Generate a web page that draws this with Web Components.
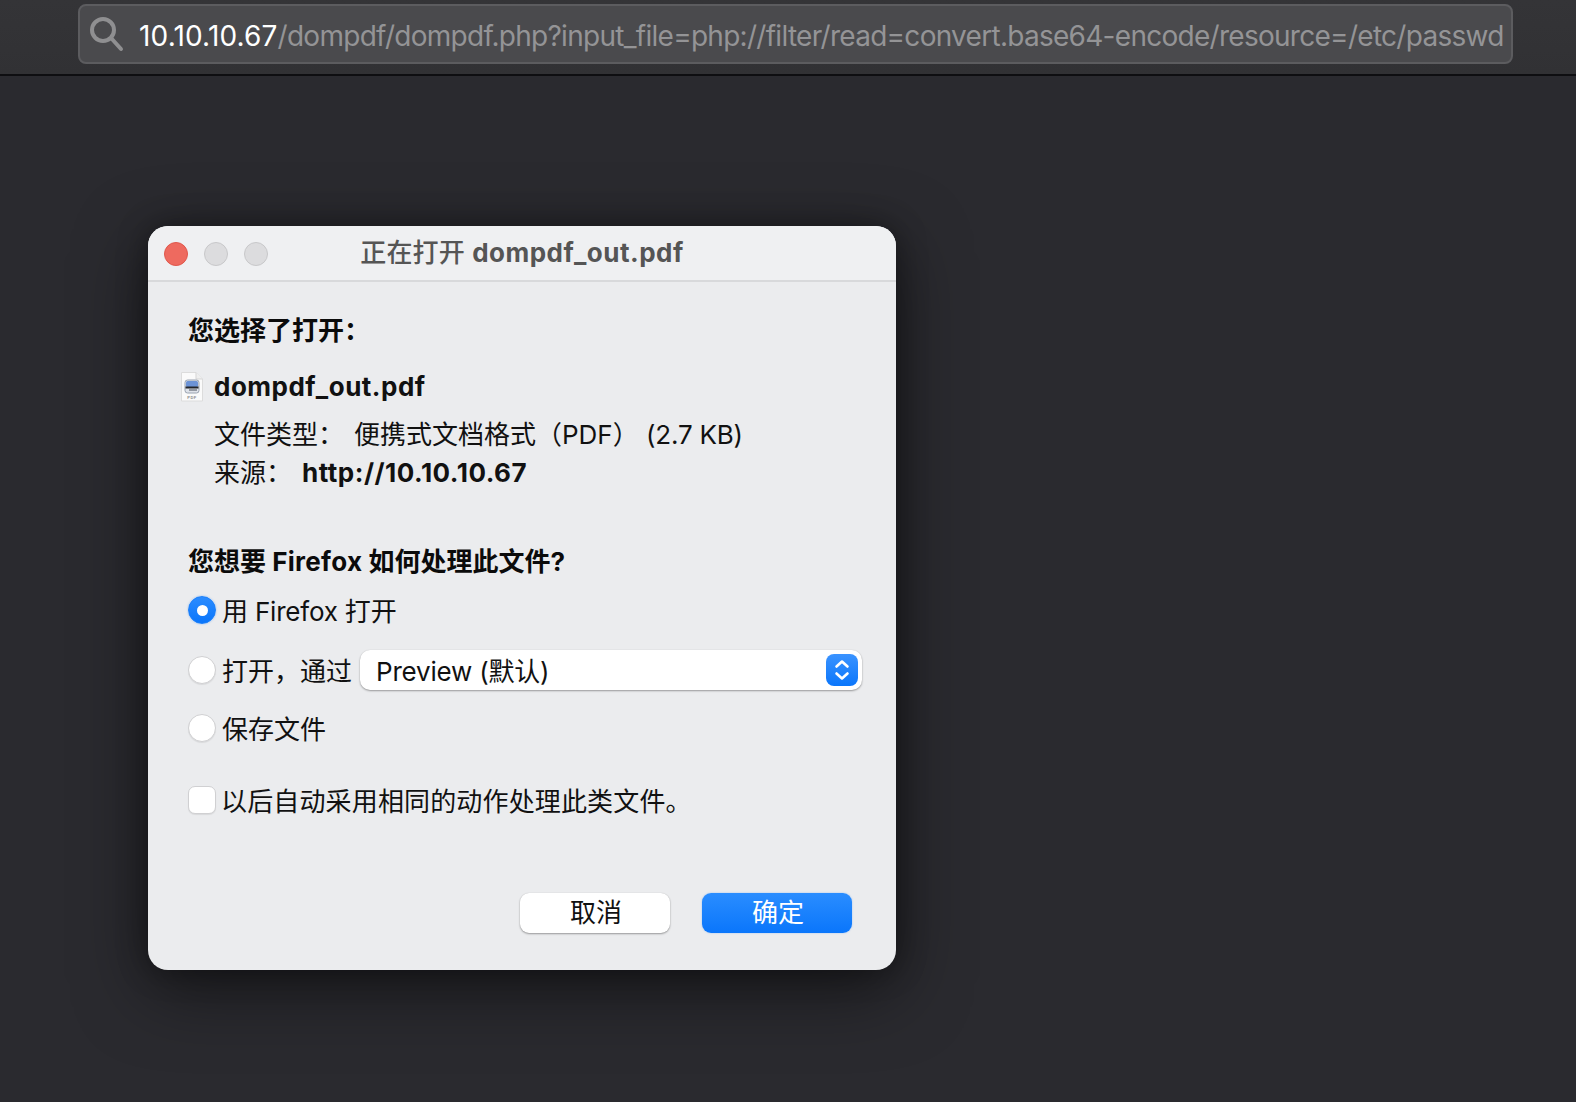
<!DOCTYPE html>
<html lang="zh">
<head>
<meta charset="utf-8">
<title>dompdf_out.pdf</title>
<style>
html, body { margin: 0; height: 100%; }
body {
  background: #2a2a2f;
  overflow: hidden;
  font-family: Inter, "Noto Sans CJK SC", sans-serif;
}
b { letter-spacing: .5px; }
.tight { letter-spacing: -.2px; }
</style>
</head>
<body>
<url-bar></url-bar>
<open-dialog>
  <span slot="title">正在打开 <b>dompdf_out.pdf</b></span>
</open-dialog>

<script>
const FONT = `Inter, "Noto Sans CJK SC", sans-serif`;

class UrlBar extends HTMLElement {
  constructor() {
    super();
    this.attachShadow({ mode: "open" });
    this.shadowRoot.innerHTML = `
<style>
:host {
  display: block;
  box-sizing: border-box;
  height: 76px;
  padding: 4px 63px 0 78px;
  background: linear-gradient(#343437, #313134);
  border-bottom: 2px solid #0e0e11;
}
.field {
  box-sizing: border-box;
  height: 60px;
  display: flex;
  align-items: center;
  background: #4a4a4d;
  border: 2px solid #5c5c5f;
  border-radius: 8px;
  padding-left: 9px;
  white-space: nowrap;
  overflow: hidden;
  font: 400 28px ${FONT};
}
svg { flex: none; margin-right: 14px; }
.host { color: #fff; letter-spacing: 0.15px; padding-top: 4px; }
.path { color: #949496; letter-spacing: -0.72px; padding-top: 4px; }
</style>
<div class="field">
  <svg width="36" height="36" viewBox="0 0 36 36" fill="none" stroke="#8f8f91" stroke-width="4" stroke-linecap="round">
    <circle cx="14" cy="14" r="11"/>
    <path d="M22.5 22.5 L32 33"/>
  </svg>
  <span class="host">10.10.10.67</span><span class="path">/dompdf/dompdf.php?input_file=php://filter/read=convert.base64-encode/resource=/etc/passwd</span>
</div>`;
  }
}

class TrafficLights extends HTMLElement {
  constructor() {
    super();
    this.attachShadow({ mode: "open" });
    this.shadowRoot.innerHTML = `
<style>
:host { display: flex; gap: 16px; }
i {
  box-sizing: border-box;
  width: 24px; height: 24px;
  border-radius: 50%;
  background: #dcdcde;
  border: 1px solid #c8c8ca;
}
i.close { background: #ee6a5f; border-color: #e0574c; }
</style>
<i class="close"></i><i></i><i></i>`;
  }
}

class FileIcon extends HTMLElement {
  constructor() {
    super();
    this.attachShadow({ mode: "open" });
    this.shadowRoot.innerHTML = `
<style>:host { display: block; width: 24px; height: 30px; }</style>
<svg width="24" height="30" viewBox="0 0 24 30">
  <path d="M1.5 .5 H16 L22.5 7 V29 H1.5 Z" fill="#fafafa" stroke="#dcdcdc"/>
  <path d="M16 .5 V7 H22.5" fill="#eee" stroke="#d5d5d5"/>
  <rect x="5" y="8" width="14" height="13" rx="2.5" fill="#dfe3ea" stroke="#9aa3b0"/>
  <rect x="6" y="9" width="12" height="6" rx="1.5" fill="#6c93d6"/>
  <path d="M5.5 15.5 H18.5" stroke="#24262b" stroke-width="2"/>
  <path d="M9 18 H17" stroke="#7b808a" stroke-width="1.5"/>
  <text x="12" y="27" text-anchor="middle" font-size="4" font-family="Liberation Sans" fill="#8a8a8a">PDF</text>
</svg>`;
  }
}

class ChoiceRow extends HTMLElement {
  constructor() {
    super();
    this.attachShadow({ mode: "open" });
    this.shadowRoot.innerHTML = `
<style>
:host { display: flex; align-items: center; height: 30px; color: #111; white-space: nowrap; flex: none; }
slot { display: block; padding-top: 4px; }
.box {
  flex: none;
  box-sizing: border-box;
  width: 28px; height: 28px;
  margin-right: 6px;
  background: #fff;
  border: 1px solid #d0d0d2;
  border-radius: 50%;
  box-shadow: 0 1px 1px rgba(0,0,0,.08);
  display: flex; align-items: center; justify-content: center;
}
:host([type="check"]) .box { border-radius: 7px; margin-right: 5px; }
:host([checked]) .box {
  background: linear-gradient(#2b8cff, #0a76fb);
  border-color: #1a7ffb;
  box-shadow: 0 0 2px rgba(10,118,251,.4);
}
:host([checked]) .box::after {
  content: "";
  width: 11px; height: 11px;
  border-radius: 50%;
  background: #fff;
}
</style>
<span class="box"></span><slot></slot>`;
  }
}

class AppSelect extends HTMLElement {
  constructor() {
    super();
    this.attachShadow({ mode: "open" });
    this.shadowRoot.innerHTML = `
<style>
:host {
  box-sizing: border-box;
  flex: none;
  display: flex;
  align-items: center;
  justify-content: space-between;
  width: 502px; height: 40px;
  padding: 0 4px 0 16px;
  background: #fff;
  border-radius: 10px;
  box-shadow: 0 1px 2px rgba(0,0,0,.35), 0 0 1px rgba(0,0,0,.12);
  color: #111;
}
slot { display: block; padding-top: 4px; }
.step {
  width: 32px; height: 32px;
  border-radius: 8px;
  background: linear-gradient(#3a93ff, #0a76fb);
  display: flex;
}
</style>
<slot></slot>
<span class="step">
  <svg width="32" height="32" viewBox="0 0 32 32" fill="none" stroke="#fff" stroke-width="2.6" stroke-linecap="round" stroke-linejoin="round">
    <path d="M10.5 12.5 L16 7.5 L21.5 12.5"/>
    <path d="M10.5 19.5 L16 24.5 L21.5 19.5"/>
  </svg>
</span>`;
  }
}

class MacButton extends HTMLElement {
  constructor() {
    super();
    this.attachShadow({ mode: "open" });
    this.shadowRoot.innerHTML = `
<style>
:host {
  box-sizing: border-box;
  display: flex;
  align-items: center;
  justify-content: center;
  width: 150px; height: 40px;
  padding-left: 2px;
  border-radius: 9px;
  background: #fff;
  color: #111;
  box-shadow: 0 1px 2px rgba(0,0,0,.35), 0 0 1px rgba(0,0,0,.15);
  font-size: 26px;
}
:host([primary]) {
  background: linear-gradient(#2a8dff, #0a76fb);
  color: #fff;
  box-shadow: 0 0 2px rgba(10,118,251,.35);
}
</style>
<slot></slot>`;
  }
}

class OpenDialog extends HTMLElement {
  constructor() {
    super();
    this.attachShadow({ mode: "open" });
    this.shadowRoot.innerHTML = `
<style>
:host {
  display: block;
  box-sizing: border-box;
  width: 748px; height: 744px;
  margin: 150px 0 0 148px;
  background: #ebecee;
  border-radius: 20px;
  box-shadow: 0 20px 70px rgba(0,0,0,.5), 0 0 30px rgba(0,0,0,.35);
  font: 400 26px/30px ${FONT};
  color: #111;
}
header {
  position: relative;
  box-sizing: border-box;
  height: 56px;
  padding: 0 16px;
  display: flex;
  align-items: center;
  justify-content: center;
  background: #eff0f2;
  border-radius: 20px 20px 0 0;
  border-bottom: 2px solid #d8d9db;
  color: #555;
}
traffic-lights { position: absolute; left: 16px; top: 16px; }
::slotted(span) { font-size: 26px; font-weight: 500; letter-spacing: .2px; }
main { padding: 34px 40px 0; }
.line { height: 30px; white-space: nowrap; }
h2 { margin: 0; font: inherit; font-weight: 700; height: 30px; color: #0b0b0b; white-space: nowrap; }
.file { display: flex; align-items: center; margin: 26px 0 0 -8px; font-weight: 700; gap: 10px; letter-spacing: .5px; }
.indent { margin-left: 26px; }
.type { margin-top: 18px; }
.source { margin-top: 8px; }
.label { display: inline-block; }
.type .label { width: 140px; }
.source .label { width: 88px; }
.source b { font-weight: 700; letter-spacing: .5px; }
.size { letter-spacing: -.2px; }
.ask { margin-top: 59px; }
.ask span { letter-spacing: .3px; }
.open-with { display: flex; align-items: center; height: 40px; margin: 25px 0 0; }
.open-with app-select { margin-left: 8px; }
.first { margin-top: 18px; }
.save { margin-top: 23px; }
.remember { margin-top: 42px; letter-spacing: .15px; }
footer { display: flex; justify-content: flex-end; gap: 32px; margin: 78px 4px 0 0; }
.tight { letter-spacing: -.2px; }
</style>
<header>
  <traffic-lights></traffic-lights>
  <slot name="title"></slot>
</header>
<main>
  <h2>您选择了打开：</h2>
  <div class="file line"><file-icon></file-icon><span>dompdf_out.pdf</span></div>
  <div class="line indent type"><span class="label">文件类型：</span>便携式文档格式（PDF） <span class="size">(2.7 KB)</span></div>
  <div class="line indent source"><span class="label">来源：</span><b>http://10.10.10.67</b></div>
  <h2 class="ask">您想要 <span>Firefox</span> 如何处理此文件?</h2>
  <choice-row class="first" checked><span class="tight">用 Firefox 打开</span></choice-row>
  <div class="open-with">
    <choice-row>打开，通过</choice-row>
    <app-select><span class="tight">Preview (默认)</span></app-select>
  </div>
  <choice-row class="save">保存文件</choice-row>
  <choice-row class="remember" type="check">以后自动采用相同的动作处理此类文件。</choice-row>
  <footer>
    <mac-button>取消</mac-button>
    <mac-button primary>确定</mac-button>
  </footer>
</main>`;
  }
}

customElements.define("url-bar", UrlBar);
customElements.define("traffic-lights", TrafficLights);
customElements.define("file-icon", FileIcon);
customElements.define("choice-row", ChoiceRow);
customElements.define("app-select", AppSelect);
customElements.define("mac-button", MacButton);
customElements.define("open-dialog", OpenDialog);
</script>
</body>
</html>
